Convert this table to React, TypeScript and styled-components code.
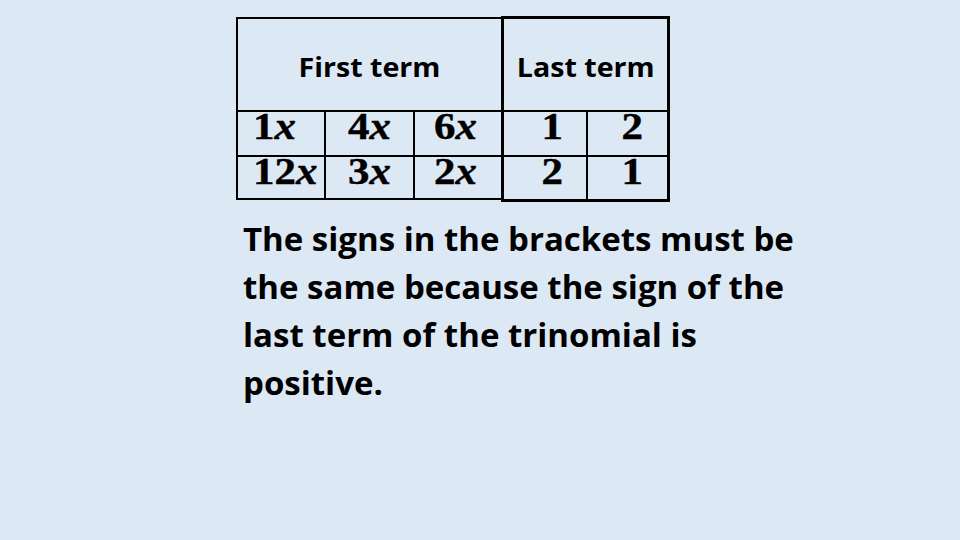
import React from 'react';
import styled, { createGlobalStyle } from 'styled-components';

const GlobalStyle = createGlobalStyle`
  html, body {
    margin: 0;
    padding: 0;
  }
`;

const SLIDE_BG = '#dde8f5';
const STRETCH = 1.16;

const Page = styled.div`
  width: 960px;
  height: 540px;
  box-sizing: border-box;
  padding: 16px 0 0 236px;
  background: ${SLIDE_BG};
  overflow: hidden;
  color: #000;
`;

const Tables = styled.div`
  display: flex;
  align-items: flex-start;
`;

const FirstTable = styled.div`
  display: grid;
  grid-template-columns: 86px 87px 86px;
  grid-template-rows: 91px 43px 41px;
  gap: 2px;
  padding: 2px 0 2px 2px;
  margin-top: 1px;
  background: #000;
`;

const LastTable = styled.div`
  display: grid;
  grid-template-columns: 82px 79px;
  grid-template-rows: 91px 43px 42px;
  gap: 2px;
  padding: 3px;
  background: #000;
`;

const HeaderCell = styled.div`
  grid-column: 1 / -1;
  display: flex;
  align-items: center;
  justify-content: center;
  padding-top: 4px;
  background: ${SLIDE_BG};
  font-family: 'Open Sans', 'Liberation Sans', sans-serif;
  font-weight: 700;
  font-size: 26px;
`;

const ValueCell = styled.div<{ $align?: 'left' | 'center'; $padLeft?: number; $padRight?: number }>`
  display: flex;
  align-items: flex-start;
  justify-content: ${(p) => (p.$align === 'left' ? 'flex-start' : 'center')};
  padding-left: ${(p) => p.$padLeft ?? 0}px;
  padding-right: ${(p) => p.$padRight ?? 0}px;
  background: ${SLIDE_BG};
  font-family: 'Liberation Serif', 'Times New Roman', serif;
  font-weight: 700;
  font-size: 37px;
  line-height: 30px;
  white-space: nowrap;
  -webkit-text-stroke: 0.4px #000;
`;

/* the table in the slide is a pasted picture, widened a little */
const Stretched = styled.span<{ $origin?: 'left' | 'center'; $scale?: number }>`
  display: inline-block;
  transform: scaleX(${(p) => p.$scale ?? STRETCH});
  transform-origin: ${(p) => p.$origin ?? 'center'} center;
`;

const Var = styled.i`
  font-style: italic;
`;

const Explanation = styled.p`
  margin: 13px 0 0 7px;
  font-family: 'Open Sans', 'Liberation Sans', sans-serif;
  font-weight: 700;
  font-size: 33px;
  line-height: 48px;
  white-space: nowrap;
`;

const firstTerms = [
  ['1', '4', '6'],
  ['12', '3', '2'],
];

const lastTerms = [
  ['1', '2'],
  ['2', '1'],
];

const firstColumnStyle = [
  { $align: 'left' as const, $padLeft: 15 },
  {},
  { $padRight: 5 },
];

const lastColumnStyle = [{ $padLeft: 14 }, { $padLeft: 9 }];

const HEADER_SCALE = 1.1;

export default function App() {
  return (
    <>
      <GlobalStyle />
      <Page>
        <Tables>
          <FirstTable>
            <HeaderCell>
              <Stretched $scale={HEADER_SCALE}>First term</Stretched>
            </HeaderCell>
            {firstTerms.map((row, r) =>
              row.map((coef, c) => (
                <ValueCell key={`f-${r}-${c}`} {...firstColumnStyle[c]}>
                  <Stretched $origin={c === 0 ? 'left' : 'center'}>
                    {coef}
                    <Var>x</Var>
                  </Stretched>
                </ValueCell>
              ))
            )}
          </FirstTable>
          <LastTable>
            <HeaderCell>
              <Stretched $scale={HEADER_SCALE}>Last term</Stretched>
            </HeaderCell>
            {lastTerms.map((row, r) =>
              row.map((value, c) => (
                <ValueCell key={`l-${r}-${c}`} {...lastColumnStyle[c]}>
                  <Stretched>{value}</Stretched>
                </ValueCell>
              ))
            )}
          </LastTable>
        </Tables>
        <Explanation>
          The signs in the brackets must be
          <br />
          the same because the sign of the
          <br />
          last term of the trinomial is
          <br />
          positive.
        </Explanation>
      </Page>
    </>
  );
}
